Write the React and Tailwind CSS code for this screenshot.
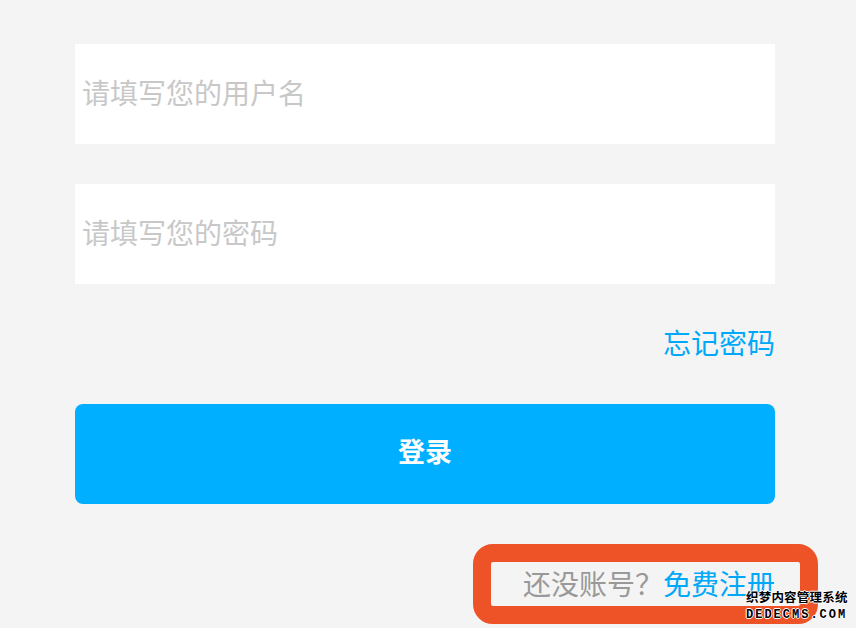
export default function App() {
  const cjk = { fontFamily: '"Noto Sans CJK SC", "Noto Sans", sans-serif' };

  return (
    <div
      className="relative h-[628px] w-[856px] overflow-hidden bg-[#f4f4f4]"
      style={cjk}
    >
      <div className="flex flex-col pl-[75px] pr-[81px] pt-[44px]">
        <input
          className="h-[100px] w-full bg-white pb-[4px] pl-[7px] text-[28px] text-[#333] outline-none placeholder:text-[#c8c8c8]"
          placeholder="请填写您的用户名"
        />
        <input
          type="password"
          className="mt-[40px] h-[100px] w-full bg-white pb-[4px] pl-[7px] text-[28px] text-[#333] outline-none placeholder:text-[#c8c8c8]"
          placeholder="请填写您的密码"
        />

        <div className="mt-[38px] text-right text-[28px] leading-[40px] text-[#00a8f8]">
          忘记密码
        </div>

        <button className="mt-[42px] h-[100px] w-full rounded-[8px] bg-[#00afff] pb-[5px] text-[27px] font-bold text-white">
          登录
        </button>

        <div className="relative mt-[59px] flex justify-end text-[28px] leading-[40px]">
          {/* annotation box */}
          <div className="absolute right-[-43px] top-[-19px] h-[80px] w-[345px] rounded-[20px] border-[18px] border-[#ee5227]" />
          <span className="relative text-[#999]">还没账号？</span>
          <span className="relative text-[#00a8f8]">免费注册</span>
        </div>
      </div>

      {/* watermark */}
      <div className="absolute left-[746px] top-[591px] flex flex-col font-bold leading-none text-black [text-shadow:_1px_0_0_#fff,_-1px_0_0_#fff,_0_1px_0_#fff,_0_-1px_0_#fff]">
        <span className="text-[12.5px] tracking-[0.2px]">织梦内容管理系统</span>
        <span
          className="mt-[5px] text-[12px] tracking-[2px]"
          style={{ fontFamily: '"Liberation Mono", monospace' }}
        >
          DEDECMS.COM
        </span>
      </div>
    </div>
  );
}
